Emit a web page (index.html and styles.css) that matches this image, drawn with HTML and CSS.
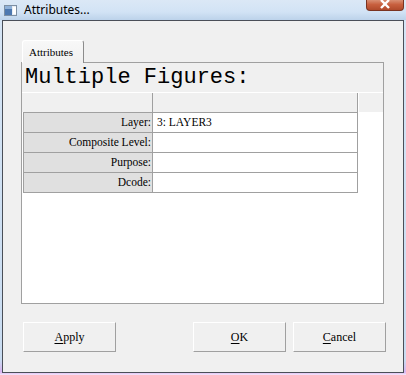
FILE: index.html
```html
<!DOCTYPE html>
<html lang="en">
<head>
  <meta charset="UTF-8">
  <title>Attributes...</title>
  <link rel="stylesheet" href="styles.css">
</head>
<body>
  <div class="window">
    <div class="titlebar">
      <svg class="app-icon" width="13" height="11" viewBox="0 0 13 11">
        <rect x="0.5" y="0.5" width="12" height="10" fill="#e8eef5" stroke="#7d8fa3"/>
        <rect x="1" y="1" width="7" height="9" fill="#4d78b0"/>
        <rect x="1" y="1" width="7" height="3" fill="#8fb1d9"/>
        <rect x="9" y="2" width="3" height="7" fill="#ffffff"/>
      </svg>
      <span class="title">Attributes...</span>
      <div class="close">
        <svg width="12" height="9" viewBox="0 0 12 9">
          <path d="M2 0 L10 8 M10 0 L2 8" stroke="#ffffff" stroke-width="2.4"/>
        </svg>
      </div>
    </div>

    <div class="client">
      <div class="tabs">
        <div class="tab">Attributes</div>
      </div>

      <div class="panel">
        <div class="caption">Multiple Figures:</div>
        <div class="head">
          <div class="head-cell"></div>
          <div class="head-cell"></div>
          <div class="head-cell last"></div>
        </div>
        <div class="props">
          <div class="prop-name">Layer:</div>
          <div class="prop-value">3: LAYER3</div>
          <div class="prop-name">Composite Level:</div>
          <div class="prop-value"></div>
          <div class="prop-name">Purpose:</div>
          <div class="prop-value"></div>
          <div class="prop-name">Dcode:</div>
          <div class="prop-value"></div>
        </div>
      </div>

      <div class="buttons">
        <button type="button" class="btn"><u>A</u>pply</button>
        <span class="spacer"></span>
        <button type="button" class="btn"><u>O</u>K</button>
        <button type="button" class="btn"><u>C</u>ancel</button>
      </div>
    </div>
  </div>
</body>
</html>
```

FILE: styles.css
```css
html, body {
  margin: 0;
  padding: 0;
}

body {
  width: 406px;
  height: 375px;
  overflow: hidden;
  background: linear-gradient(to bottom, #d6e5f5 0, #c9dcf1 360px, #d9b2ef 372px, #f4e8fb 375px);
  font-family: "Liberation Serif", "Times New Roman", serif;
  color: #000;
}

.window {
  width: 406px;
}

.titlebar {
  height: 20px;
  display: flex;
  align-items: center;
  position: relative;
  background: linear-gradient(to bottom, #dbe8f6 0, #d2e3f5 60%, #bcd2ea 100%);
}

.app-icon {
  margin-left: 4px;
  margin-top: 1px;
}

.title {
  margin-left: 7px;
  font-family: "Noto Sans", "Open Sans", sans-serif;
  font-size: 12px;
  color: #000;
  line-height: 20px;
}

.close {
  position: absolute;
  top: 0;
  right: 2px;
  width: 38px;
  height: 11px;
  box-sizing: border-box;
  border: 1px solid #7a3320;
  border-top: none;
  border-radius: 0 0 4px 4px;
  background: linear-gradient(to bottom, #d98f73 0, #c8603f 45%, #b04a2b 100%);
  display: flex;
  justify-content: center;
  align-items: flex-start;
}

.client {
  margin-left: 2px;
  width: 402px;
  height: 353px;
  box-sizing: border-box;
  border: 1px solid #4a4f58;
  background: #f0f0f0;
}

.tabs {
  display: flex;
  padding: 19px 0 0 19px;
}

.tab {
  position: relative;
  z-index: 1;
  width: 62px;
  height: 23px;
  box-sizing: border-box;
  margin-bottom: -1px;
  padding: 5px 0 0 6px;
  border: 1px solid #ffffff;
  border-right: 1px solid #8c8c8c;
  border-bottom: none;
  border-radius: 3px 3px 0 0;
  background: linear-gradient(to bottom, #f8f8f8, #f0f0f0);
  font-size: 11px;
  line-height: 13px;
}

.panel {
  margin-left: 18px;
  width: 363px;
  height: 242px;
  box-sizing: border-box;
  border: 1px solid #a0a0a0;
  background: #ffffff;
}

.caption {
  height: 29px;
  padding-left: 3px;
  background: #f0f0f0;
  font-family: "Liberation Mono", "Courier New", monospace;
  font-size: 22px;
  line-height: 29px;
}

.head {
  display: grid;
  grid-template-columns: 131px 205px 1fr;
  height: 20px;
  box-sizing: border-box;
  border-top: 1px solid #ffffff;
  background: #f0f0f0;
}

.head-cell {
  border-right: 1px solid #a0a0a0;
}

.head-cell.last {
  border-right: none;
  border-left: 1px solid #ffffff;
}

.props {
  display: grid;
  grid-template-columns: 129px 205px;
  grid-auto-rows: 20px;
  width: 335px;
  margin-left: 1px;
  box-sizing: border-box;
  border-top: 1px solid #a0a0a0;
  border-left: 1px solid #a0a0a0;
}

.prop-name,
.prop-value {
  box-sizing: border-box;
  border-right: 1px solid #a0a0a0;
  border-bottom: 1px solid #a0a0a0;
  font-size: 11.5px;
  line-height: 19px;
  white-space: nowrap;
}

.prop-name {
  background: #e0e0e0;
  text-align: right;
  padding-right: 1px;
}

.prop-value {
  background: #ffffff;
  padding-left: 4px;
}

.buttons {
  display: flex;
  gap: 7px;
  margin-top: 18px;
  padding-left: 20px;
}

.spacer {
  width: 63px;
}

.btn {
  width: 93px;
  height: 30px;
  margin: 0;
  padding: 0;
  box-sizing: border-box;
  border: 1px solid #ffffff;
  border-right-color: #a0a0a0;
  border-bottom-color: #a0a0a0;
  border-radius: 0;
  background: #f0f0f0;
  font-family: "Liberation Serif", "Times New Roman", serif;
  font-size: 12px;
  color: #000;
}

.btn u {
  text-decoration-thickness: 1px;
  text-underline-offset: 2px;
}
```
